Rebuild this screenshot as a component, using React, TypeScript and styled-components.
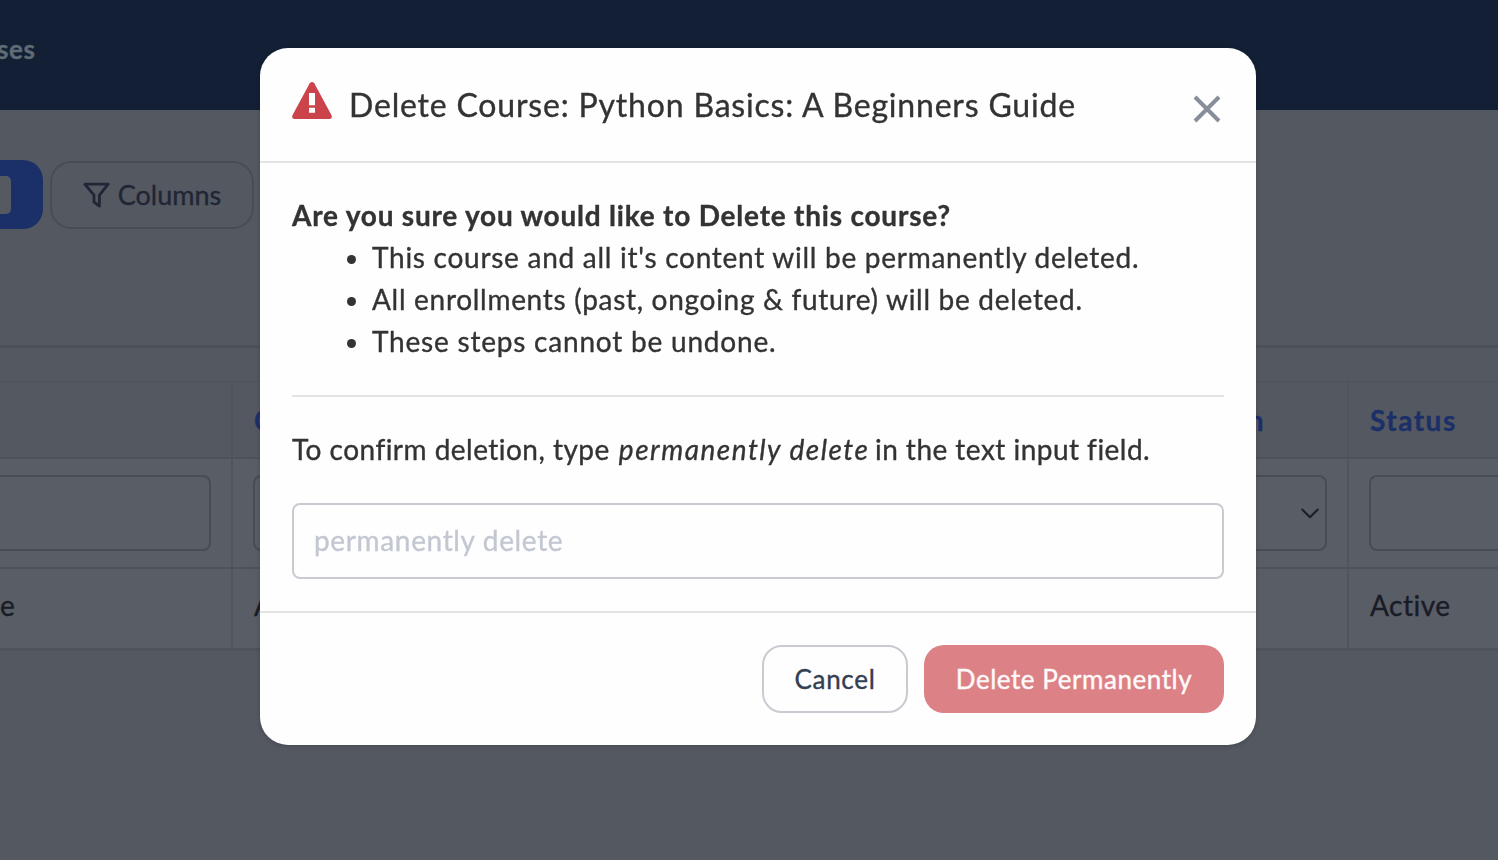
import React from "react";
import styled, { createGlobalStyle } from "styled-components";

const GlobalStyle = createGlobalStyle`
  *, *::before, *::after { box-sizing: border-box; }
  body {
    margin: 0;
    background: #545860;
    font-family: Lato, "Liberation Sans", sans-serif;
    font-size: 28px;
    line-height: 42px;
    color: #333335;
    overflow: hidden;
    -webkit-text-stroke: 0.35px currentColor;
  }
`;

const Page = styled.div`
  height: 860px;
  width: 100%;
  overflow: hidden;
`;

const TopBar = styled.header`
  height: 110px;
  background: #131f34;
  display: flex;
  align-items: flex-start;
  padding-top: 28px;
`;

const NavLabel = styled.span`
  color: #5f6b75;
  font-size: 26px;
  font-weight: 700;
  letter-spacing: 0.6px;
  margin-left: -3px;
`;

const Toolbar = styled.div`
  display: flex;
  align-items: center;
  gap: 7px;
  height: 69px;
  margin-top: 50px;
`;

const PrimaryButton = styled.div`
  display: flex;
  align-items: center;
  width: 43px;
  height: 69px;
  border-radius: 0 20px 20px 0;
  background: #1b3069;
`;

const CountBadge = styled.span`
  width: 11px;
  height: 38px;
  border-radius: 0 5px 5px 0;
  background: #555a62;
`;

const ColumnsButton = styled.div`
  display: flex;
  align-items: center;
  justify-content: center;
  gap: 8px;
  width: 204px;
  height: 68px;
  border: 2px solid #484d55;
  border-radius: 21px;
  color: #1f2635;
  font-size: 27px;
`;

const TablePanel = styled.section`
  margin-top: 116px;
  border-top: 3px solid #4c5159;
  padding-top: 33px;
`;

const TableRow = styled.div<{ $height: number; $line: number; $shade: string }>`
  display: grid;
  grid-template-columns: 233px 558px 558px 1fr;
  height: ${(p) => p.$height}px;
  background: ${(p) => p.$shade};
  border-bottom: ${(p) => p.$line}px solid #4e525a;
`;

const Cell = styled.div`
  display: flex;
  align-items: center;
  padding: 0 21px 0 20px;
  border-right: 2px solid #50545c;
  &:last-child { border-right: 0; padding-right: 0; }
  &:first-child { padding-left: 0; }
`;

const HeadCell = styled(Cell)<{ $inset?: number }>`
  justify-content: ${(p) => (p.$inset ? "flex-end" : "flex-start")};
  padding: 0 ${(p) => p.$inset ?? 21}px 0 21px;
  color: #1b2f69;
  font-weight: 700;
  letter-spacing: 1.5px;
`;

const BodyCell = styled(Cell)`
  color: #191c25;
  letter-spacing: 0.5px;
  padding: 0 21px 7px;
`;

const Filter = styled.div<{ $side: "start" | "middle" | "end" }>`
  flex: 1;
  height: 76px;
  display: flex;
  align-items: center;
  justify-content: flex-end;
  padding-right: 6px;
  border: 2px solid #474c55;
  border-radius: 8px;
  border-left-width: ${(p) => (p.$side === "start" ? 0 : 2)}px;
  border-right-width: ${(p) => (p.$side === "end" ? 0 : 2)}px;
  border-top-left-radius: ${(p) => (p.$side === "start" ? 0 : 8)}px;
  border-bottom-left-radius: ${(p) => (p.$side === "start" ? 0 : 8)}px;
  border-top-right-radius: ${(p) => (p.$side === "end" ? 0 : 8)}px;
  border-bottom-right-radius: ${(p) => (p.$side === "end" ? 0 : 8)}px;
`;

const FilterCell = styled(Cell)`
  padding-right: 20px;
`;

const Overlay = styled.div`
  position: fixed;
  inset: 0;
  padding: 48px 0 0 260px;
`;

const Dialog = styled.div`
  width: 996px;
  height: 697px;
  background: #fefefe;
  border-radius: 28px;
  display: flex;
  flex-direction: column;
  box-shadow: 0 1px 4px rgba(20, 24, 34, 0.25);
`;

const DialogHeader = styled.div`
  display: flex;
  align-items: flex-start;
  height: 115px;
  padding: 32px 35px 0 32px;
  border-bottom: 2px solid #e3e3e4;
`;

const Title = styled.h1`
  flex: 1;
  margin: 1px 0 0 17px;
  font-size: 32px;
  line-height: 48px;
  font-weight: 400;
  letter-spacing: 0.81px;
  white-space: nowrap;
`;

const CloseButton = styled.button`
  width: 28px;
  height: 28px;
  margin-top: 15px;
  padding: 0;
  border: 0;
  background: none;
  line-height: 0;
`;

const DialogBody = styled.div`
  height: 450px;
  padding: 31px 32px 32px;
  border-bottom: 2px solid #e3e3e4;
  white-space: nowrap;
`;

const Question = styled.p`
  margin: 0;
  font-weight: 700;
  letter-spacing: 0.79px;
`;

const Consequences = styled.ul`
  list-style: none;
  margin: 0;
  padding: 0 0 0 55px;
`;

const Consequence = styled.li<{ $tracking: number }>`
  display: flex;
  align-items: center;
  letter-spacing: ${(p) => p.$tracking}px;
  &::before {
    content: "";
    width: 9px;
    height: 9px;
    margin: 4px 16px 0 0;
    border-radius: 50%;
    background: #333335;
  }
`;

const Divider = styled.hr`
  height: 2px;
  margin: 33px 0 31px;
  border: 0;
  background: #e3e3e4;
`;

const Instruction = styled.p`
  margin: 0;
  letter-spacing: 0.47px;
`;

const Phrase = styled.em`
  letter-spacing: 1.5px;
  margin: 0 -2px 0 1.5px;
`;

const ConfirmInput = styled.input`
  display: block;
  width: 100%;
  height: 76px;
  margin-top: 33px;
  padding: 0 20px 3px;
  border: 2px solid #c8cbd1;
  border-radius: 8px;
  background: #fefefe;
  font: inherit;
  letter-spacing: 0.65px;
  outline: 0;
  &::placeholder { color: #c2c7d1; opacity: 1; }
`;

const DialogFooter = styled.div`
  display: flex;
  justify-content: flex-end;
  gap: 16px;
  padding: 32px 32px 0;
`;

const ActionButton = styled.button<{ $danger?: boolean }>`
  width: ${(p) => (p.$danger ? 300 : 146)}px;
  height: 68px;
  padding: 0 0 1px;
  border: ${(p) => (p.$danger ? "0" : "2px solid #c8cbd1")};
  border-radius: 20px;
  background: ${(p) => (p.$danger ? "#dc8287" : "#fefefe")};
  color: ${(p) => (p.$danger ? "#fffafa" : "#333e52")};
  font-family: inherit;
  font-size: 26px;
  letter-spacing: ${(p) => (p.$danger ? 0.55 : 0.7)}px;
`;

const FunnelIcon = () => (
  <svg width="27" height="26" viewBox="0 0 27 26" fill="none" stroke="currentColor" strokeWidth="2.8" strokeLinejoin="round">
    <path d="M1.8 2.2H25.2L16.4 13.2V24.2L11 20.2V13.2Z" />
  </svg>
);

const ChevronIcon = () => (
  <svg width="18" height="11" viewBox="0 0 18 11" fill="none" stroke="#1c1f27" strokeWidth="2" strokeLinecap="round" strokeLinejoin="round">
    <path d="M1.2 1.5L9 9.3L16.8 1.5" />
  </svg>
);

const WarningIcon = () => (
  <svg width="40" height="40" viewBox="0 0 40 40">
    <path d="M17.7 3.2Q20 .8 22.3 3.2L39.4 35Q41 38.6 37.4 39H2.6Q-1 38.6.6 35Z" fill="#cc444b" />
    <path d="M17 13h6v12.2h-6zM17 27.8h6v5h-6z" fill="#fefefe" />
  </svg>
);

const CloseIcon = () => (
  <svg width="28" height="28" viewBox="0 0 28 28" stroke="#888e99" strokeWidth="4">
    <path d="M2 2L26 26M26 2L2 26" />
  </svg>
);

export default function App() {
  return (
    <Page>
      <GlobalStyle />
      <TopBar>
        <NavLabel>ses</NavLabel>
      </TopBar>
      <Toolbar>
        <PrimaryButton>
          <CountBadge />
        </PrimaryButton>
        <ColumnsButton>
          <FunnelIcon />
          Columns
        </ColumnsButton>
      </Toolbar>
      <TablePanel>
        <TableRow $height={1} $line={1} $shade="#545860" />
        <TableRow $height={77} $line={2} $shade="#545860">
          <HeadCell />
          <HeadCell>C</HeadCell>
          <HeadCell $inset={82}>n</HeadCell>
          <HeadCell>Status</HeadCell>
        </TableRow>
        <TableRow $height={110} $line={2} $shade="#585d66">
          <FilterCell><Filter $side="start" /></FilterCell>
          <FilterCell><Filter $side="middle" /></FilterCell>
          <FilterCell><Filter $side="middle"><ChevronIcon /></Filter></FilterCell>
          <FilterCell><Filter $side="end" /></FilterCell>
        </TableRow>
        <TableRow $height={82} $line={3} $shade="#585d66">
          <BodyCell>e</BodyCell>
          <BodyCell>A</BodyCell>
          <BodyCell />
          <BodyCell>Active</BodyCell>
        </TableRow>
      </TablePanel>
      <Overlay>
        <Dialog role="dialog">
          <DialogHeader>
            <WarningIcon />
            <Title>Delete Course: Python Basics: A Beginners Guide</Title>
            <CloseButton aria-label="Close"><CloseIcon /></CloseButton>
          </DialogHeader>
          <DialogBody>
            <Question>Are you sure you would like to Delete this course?</Question>
            <Consequences>
              <Consequence $tracking={0.73}>This course and all it's content will be permanently deleted.</Consequence>
              <Consequence $tracking={0.7}>All enrollments (past, ongoing &amp; future) will be deleted.</Consequence>
              <Consequence $tracking={0.79}>These steps cannot be undone.</Consequence>
            </Consequences>
            <Divider />
            <Instruction>
              To confirm deletion, type <Phrase>permanently delete</Phrase> in the text input field.
            </Instruction>
            <ConfirmInput placeholder="permanently delete" />
          </DialogBody>
          <DialogFooter>
            <ActionButton>Cancel</ActionButton>
            <ActionButton $danger>Delete Permanently</ActionButton>
          </DialogFooter>
        </Dialog>
      </Overlay>
    </Page>
  );
}
